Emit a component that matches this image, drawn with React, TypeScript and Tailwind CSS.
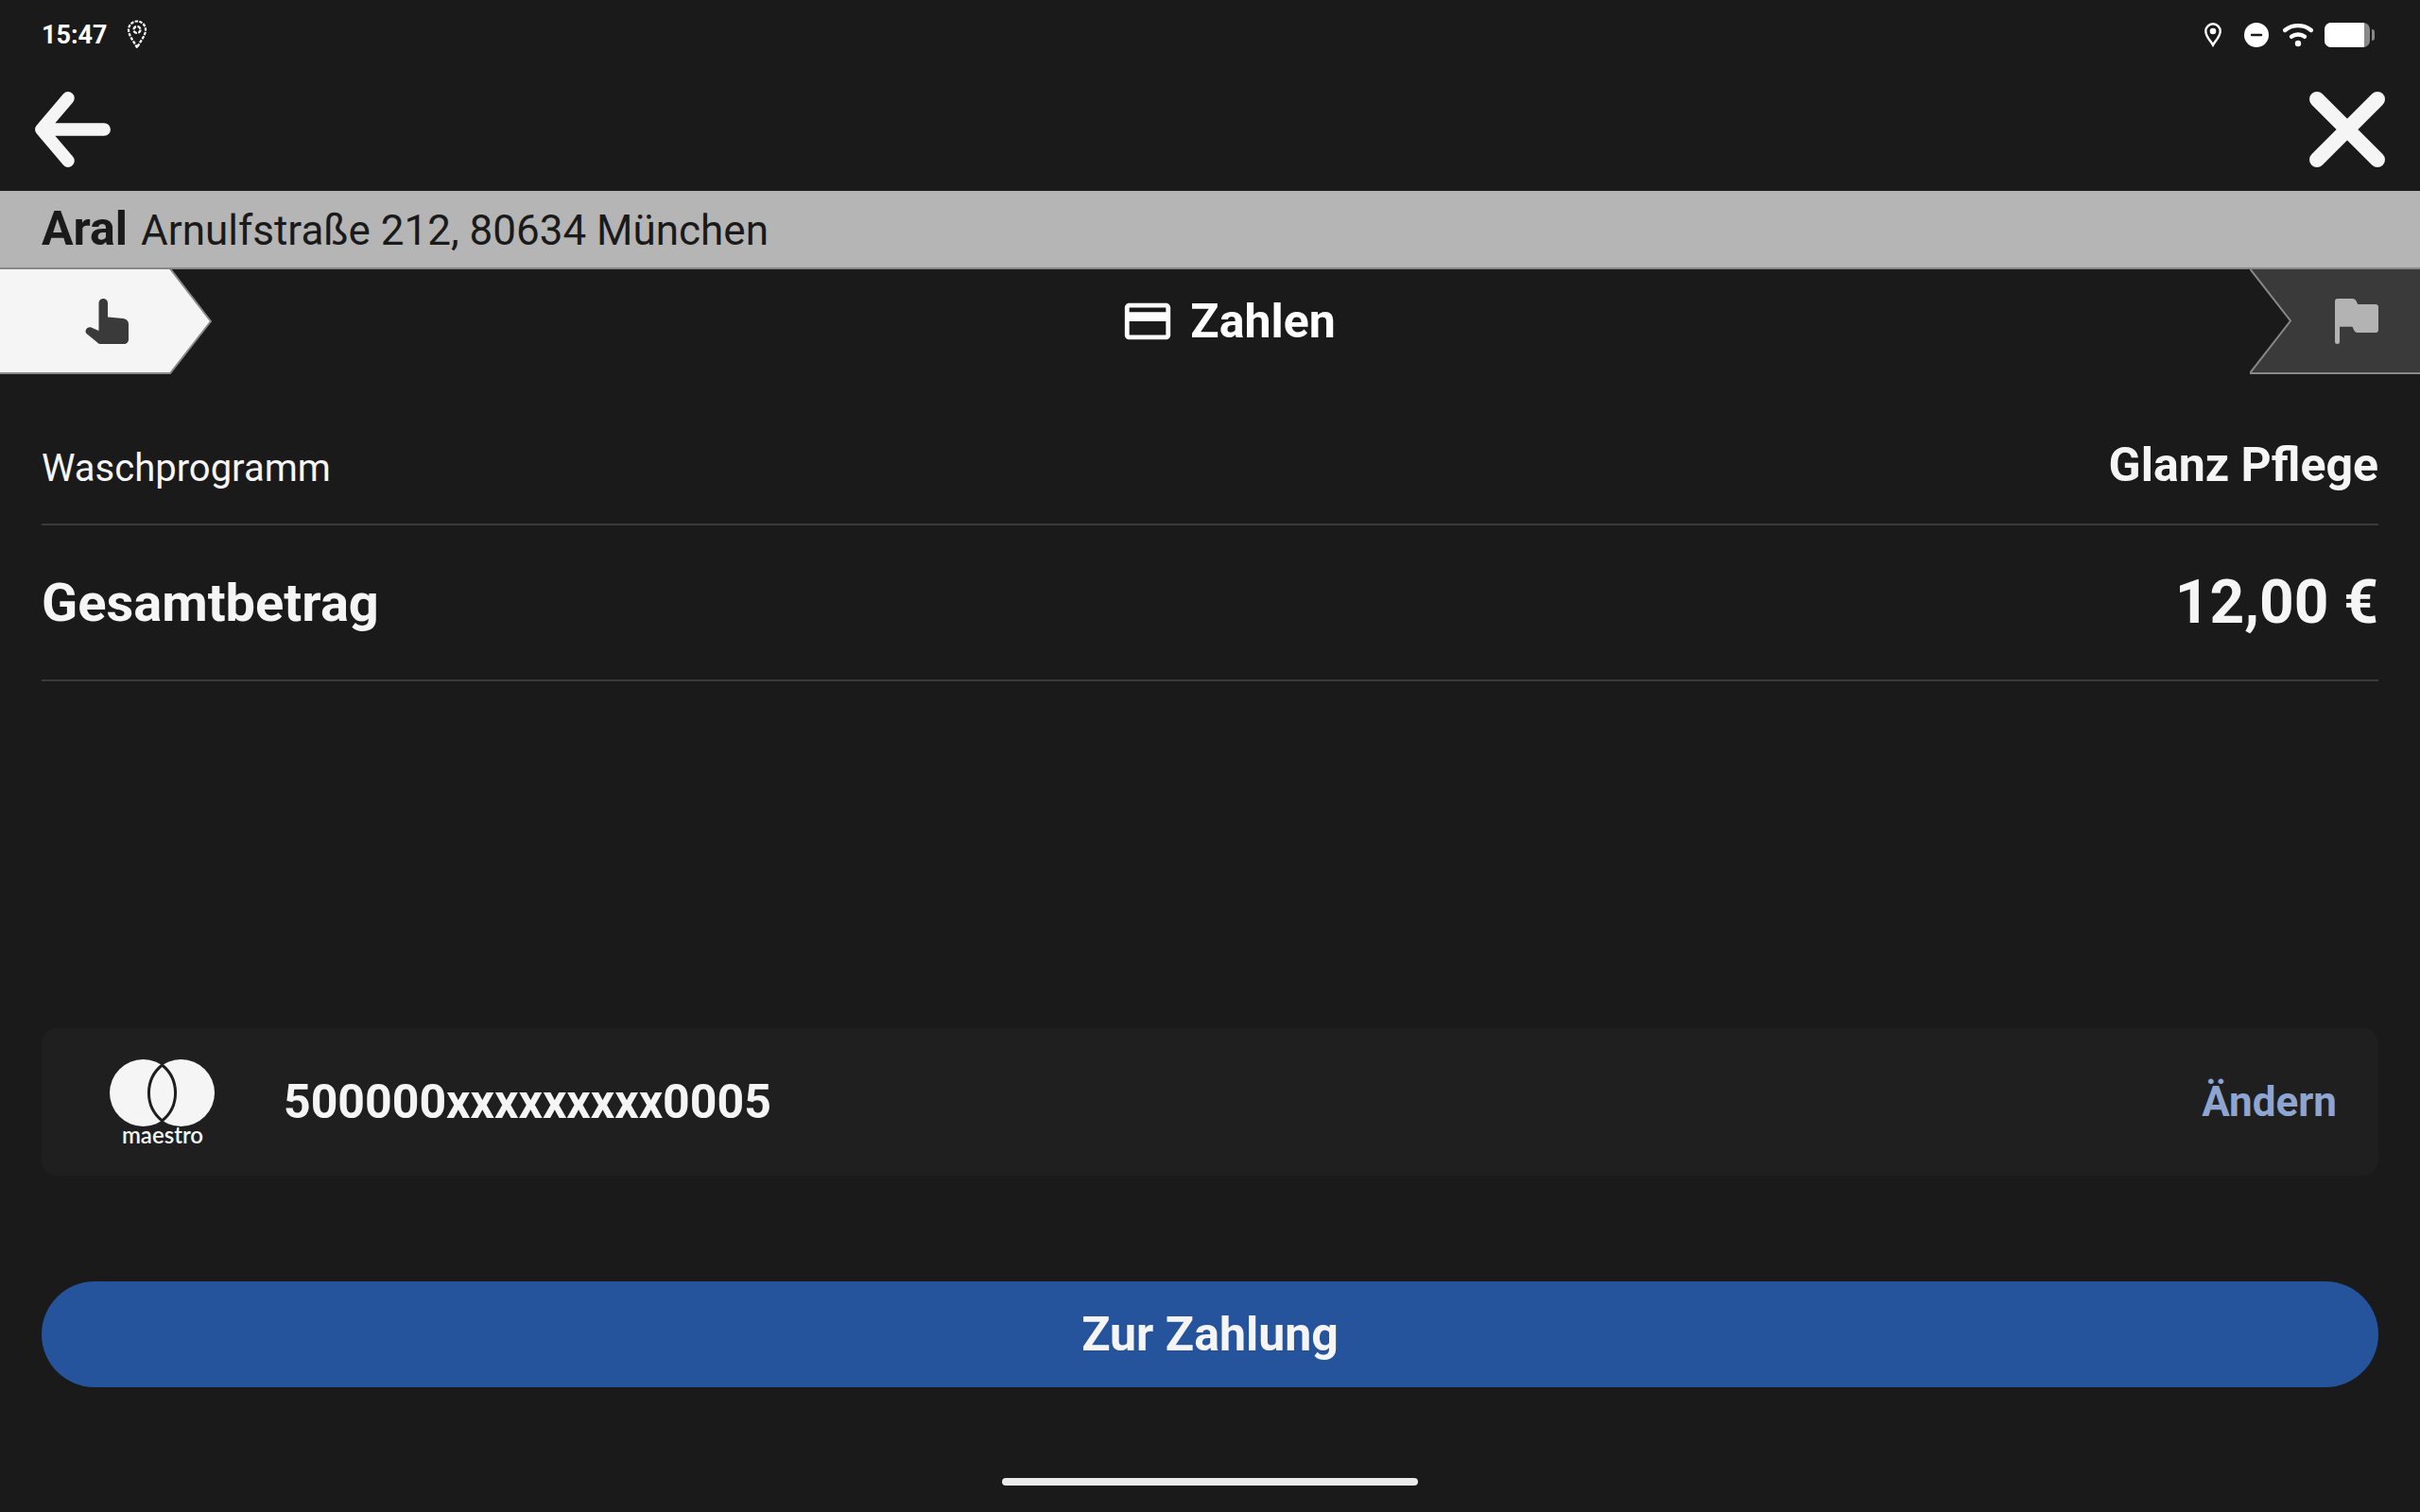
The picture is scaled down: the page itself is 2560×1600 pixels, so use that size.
import React, { useState } from "react";

type IconProps = {
  className?: string;
};

function DashedPinIcon({ className }: IconProps) {
  return (
    <svg viewBox="0 0 22 32" className={className} fill="none" stroke="currentColor" strokeWidth="2.200" aria-hidden="true">
      <path d="M11 29.500C8 23 2 17 2 10.500A9 9 0 0 1 20 10.500C20 17 14 23 11 29.500" strokeDasharray="3.400 1.300" />
      <circle cx="11" cy="10.500" r="3.500" strokeDasharray="4 1.500" />
    </svg>
  );
}

function PinIcon({ className }: IconProps) {
  return (
    <svg viewBox="0 0 18 26" className={className} aria-hidden="true">
      <path
        d="M9 23.600C6.500 19 1.300 15 1.300 9A7.700 7.700 0 0 1 16.700 9C16.700 15 11.500 19 9 23.600Z"
        fill="none"
        stroke="currentColor"
        strokeWidth="2.400"
      />
      <circle cx="9" cy="9" r="3.300" fill="currentColor" />
    </svg>
  );
}

function DoNotDisturbIcon({ className }: IconProps) {
  return (
    <svg viewBox="0 0 26 26" className={className} aria-hidden="true">
      <circle cx="13" cy="13" r="13" fill="currentColor" />
      <path d="M8 13H18" stroke="#1a1a1a" strokeWidth="2.400" strokeLinecap="round" />
    </svg>
  );
}

function WifiIcon({ className }: IconProps) {
  return (
    <svg viewBox="0 0 32 26" className={className} fill="none" stroke="currentColor" strokeWidth="4.400" strokeLinecap="round" aria-hidden="true">
      <path d="M2.200 8C10 1.500 22 1.500 29.800 8" />
      <path d="M9 14.800C13 11.800 19 11.800 23 14.800" />
      <circle cx="16" cy="22" r="3.200" fill="currentColor" stroke="none" />
    </svg>
  );
}

function BatteryIcon({ className }: IconProps) {
  return (
    <svg viewBox="0 0 54 26" className={className} aria-hidden="true">
      <rect width="48" height="26" rx="7" fill="#888" />
      <path d="M7 0H42V26H7A7 7 0 0 1 0 19V7A7 7 0 0 1 7 0Z" fill="currentColor" />
      <path d="M50 7C52 7 53 8 53 10V16C53 18 52 19 50 19Z" fill="#888" />
    </svg>
  );
}

function BackIcon({ className }: IconProps) {
  return (
    <svg viewBox="0 0 80 80" className={className} fill="none" stroke="currentColor" strokeWidth="13.500" strokeLinecap="round" strokeLinejoin="round" aria-hidden="true">
      <path d="M35 6.800L6.800 40L35 73.200M10 40H73.200" />
    </svg>
  );
}

function CloseIcon({ className }: IconProps) {
  return (
    <svg viewBox="0 0 80 80" className={className} fill="none" stroke="currentColor" strokeWidth="16" strokeLinecap="round" aria-hidden="true">
      <path d="M8 8L72 72M72 8L8 72" />
    </svg>
  );
}

function HandIcon({ className }: IconProps) {
  return (
    <svg viewBox="0 0 46 48" className={className} fill="currentColor" aria-hidden="true">
      <path d="M14.500 4.700A4.700 4.700 0 0 1 24 4.700V19.500L40 21C43.800 21.500 46 23.500 46 27V43C46 46 44 48 41 48H16C14.500 48 13.500 47.300 12.500 46L1.500 37C0.300 35.500 0.200 34 1.200 32.500C2.400 30.500 5 29.800 7 30.800L14.500 34Z" />
    </svg>
  );
}

function FlagIcon({ className }: IconProps) {
  return (
    <svg viewBox="0 0 46 48" className={className} fill="currentColor" aria-hidden="true">
      <path d="M3 0H18.500C20.500 0 21.800 1 22.500 2.600L24.300 6H43C45 6 46 7 46 9V33C46 35 45 36 43 36H24C22 36 21 35 20.200 33.500L18.500 29.800H5V45.500A2.500 2.500 0 0 1 0 45.500V3C0 1 1 0 3 0Z" />
    </svg>
  );
}

function CreditCardIcon({ className }: IconProps) {
  return (
    <svg viewBox="0 0 24 24" className={className} fill="currentColor" aria-hidden="true">
      <path d="M20 4H4c-1.110 0-1.990.89-1.990 2L2 18c0 1.110.89 2 2 2h16c1.110 0 2-.89 2-2V6c0-1.110-.89-2-2-2zm0 14H4v-6h16v6zm0-10H4V6h16v2z" />
    </svg>
  );
}

function MaestroLogo({ className }: IconProps) {
  return (
    <svg viewBox="0 0 112 96" className={className} role="img" aria-label="maestro">
      <circle cx="35.500" cy="38.500" r="35.500" fill="#f5f5f5" />
      <circle cx="75.500" cy="38.500" r="35.500" fill="#f5f5f5" />
      <path d="M55.500 9A38 38 0 0 1 55.500 68A38 38 0 0 1 55.500 9Z" fill="none" stroke="#1f1f1f" strokeWidth="3" />
      <text x="56" y="92" textAnchor="middle" fill="#f5f5f5" className="font-['Lato',sans-serif] text-[24px] font-semibold">
        maestro
      </text>
    </svg>
  );
}

type RowProps = {
  label: string;
  value: string;
};

const wash: RowProps = { label: "Waschprogramm", value: "Glanz Pflege" };
const total: RowProps = { label: "Gesamtbetrag", value: "12,00 €" };

export default function App() {
  const [paying, setPaying] = useState(false);

  return (
    <div className="flex min-h-screen flex-col bg-[#1a1a1a] font-['Roboto',sans-serif] text-[#f5f5f5]">
      <div className="flex h-[74px] items-center justify-between pr-[47px] pl-11 text-white">
        <div className="flex items-center gap-5">
          <span className="text-[27px] font-bold">15:47</span>
          <DashedPinIcon className="h-8 w-[22px]" />
        </div>
        <div className="flex items-center">
          <PinIcon className="mr-6 h-[26px] w-[18px]" />
          <DoNotDisturbIcon className="mr-[15px] size-[26px]" />
          <WifiIcon className="mr-3 h-[26px] w-8" />
          <BatteryIcon className="h-[26px] w-[54px]" />
        </div>
      </div>

      <header className="flex h-32 items-start justify-between px-[37px] pt-[23px]">
        <button type="button" aria-label="Zurück">
          <BackIcon className="size-20" />
        </button>
        <button type="button" aria-label="Schließen">
          <CloseIcon className="size-20" />
        </button>
      </header>

      <div className="flex h-[83px] items-baseline gap-3.5 border-b-2 border-[#888] bg-[#b5b5b5] px-11 pt-3 text-[#1a1a1a]">
        <span className="text-[50px] leading-[56px] font-bold">Aral</span>
        <span className="text-[44px] leading-[56px]">Arnulfstraße 212, 80634 München</span>
      </div>

      {/* Steps: select, pay, done */}
      <nav className="flex h-[111px]">
        <div className="relative w-56 text-[#3a3a3a]">
          <svg viewBox="0 0 224 111" className="h-full w-full" aria-hidden="true">
            <path d="M-2 -2H179L223 55L180 110H-2Z" fill="#f5f5f5" stroke="#888" strokeWidth="2" />
          </svg>
          <HandIcon className="absolute top-[31px] left-[90px] h-12 w-[46px]" />
        </div>
        <div className="flex flex-1 items-center justify-center gap-4 pr-1.5 pb-0.5 text-white">
          <CreditCardIcon className="size-[58px]" />
          <span className="text-[50px] leading-[56px] font-bold">Zahlen</span>
        </div>
        <div className="relative w-[180px] text-[#b3b3b3]">
          <svg viewBox="0 0 180 111" className="h-full w-full" aria-hidden="true">
            <path d="M-1 -2L43 54.500L0 110H182V-2Z" fill="#3a3a3a" stroke="#888" strokeWidth="2" />
          </svg>
          <FlagIcon className="absolute top-[31px] right-11 h-12 w-[46px]" />
        </div>
      </nav>

      <main className="flex flex-1 flex-col px-11 pt-[68px]">
        <dl>
          <div className="flex items-baseline justify-between border-b-2 border-[#3a3a3a] pb-[30px]">
            <dt className="text-[40px] leading-[56px]">{wash.label}</dt>
            <dd className="text-[50px] leading-[56px] font-bold">{wash.value}</dd>
          </div>
          <div className="flex h-[165px] items-center justify-between border-b-2 border-[#3a3a3a]">
            <dt className="text-[56px] font-bold">{total.label}</dt>
            <dd className="text-[64px] font-bold">{total.value}</dd>
          </div>
        </dl>

        <section className="mt-auto flex h-[156px] items-center rounded-2xl bg-[#1f1f1f] pr-11 pl-[72px]">
          <MaestroLogo className="h-24 w-28" />
          <span className="ml-[72px] flex-1 text-[50px] font-bold">500000xxxxxxxxx0005</span>
          <button type="button" className="text-[44px] font-bold text-[#8fa5d1]">
            Ändern
          </button>
        </section>

        <button
          type="button"
          disabled={paying}
          onClick={() => setPaying(true)}
          className="mt-28 h-28 rounded-full bg-[#26549c] text-[50px] font-bold"
        >
          Zur Zahlung
        </button>
      </main>

      <footer className="flex justify-center pt-24 pb-7">
        <div className="h-2 w-[440px] rounded-full bg-[#ebebeb]" />
      </footer>
    </div>
  );
}
